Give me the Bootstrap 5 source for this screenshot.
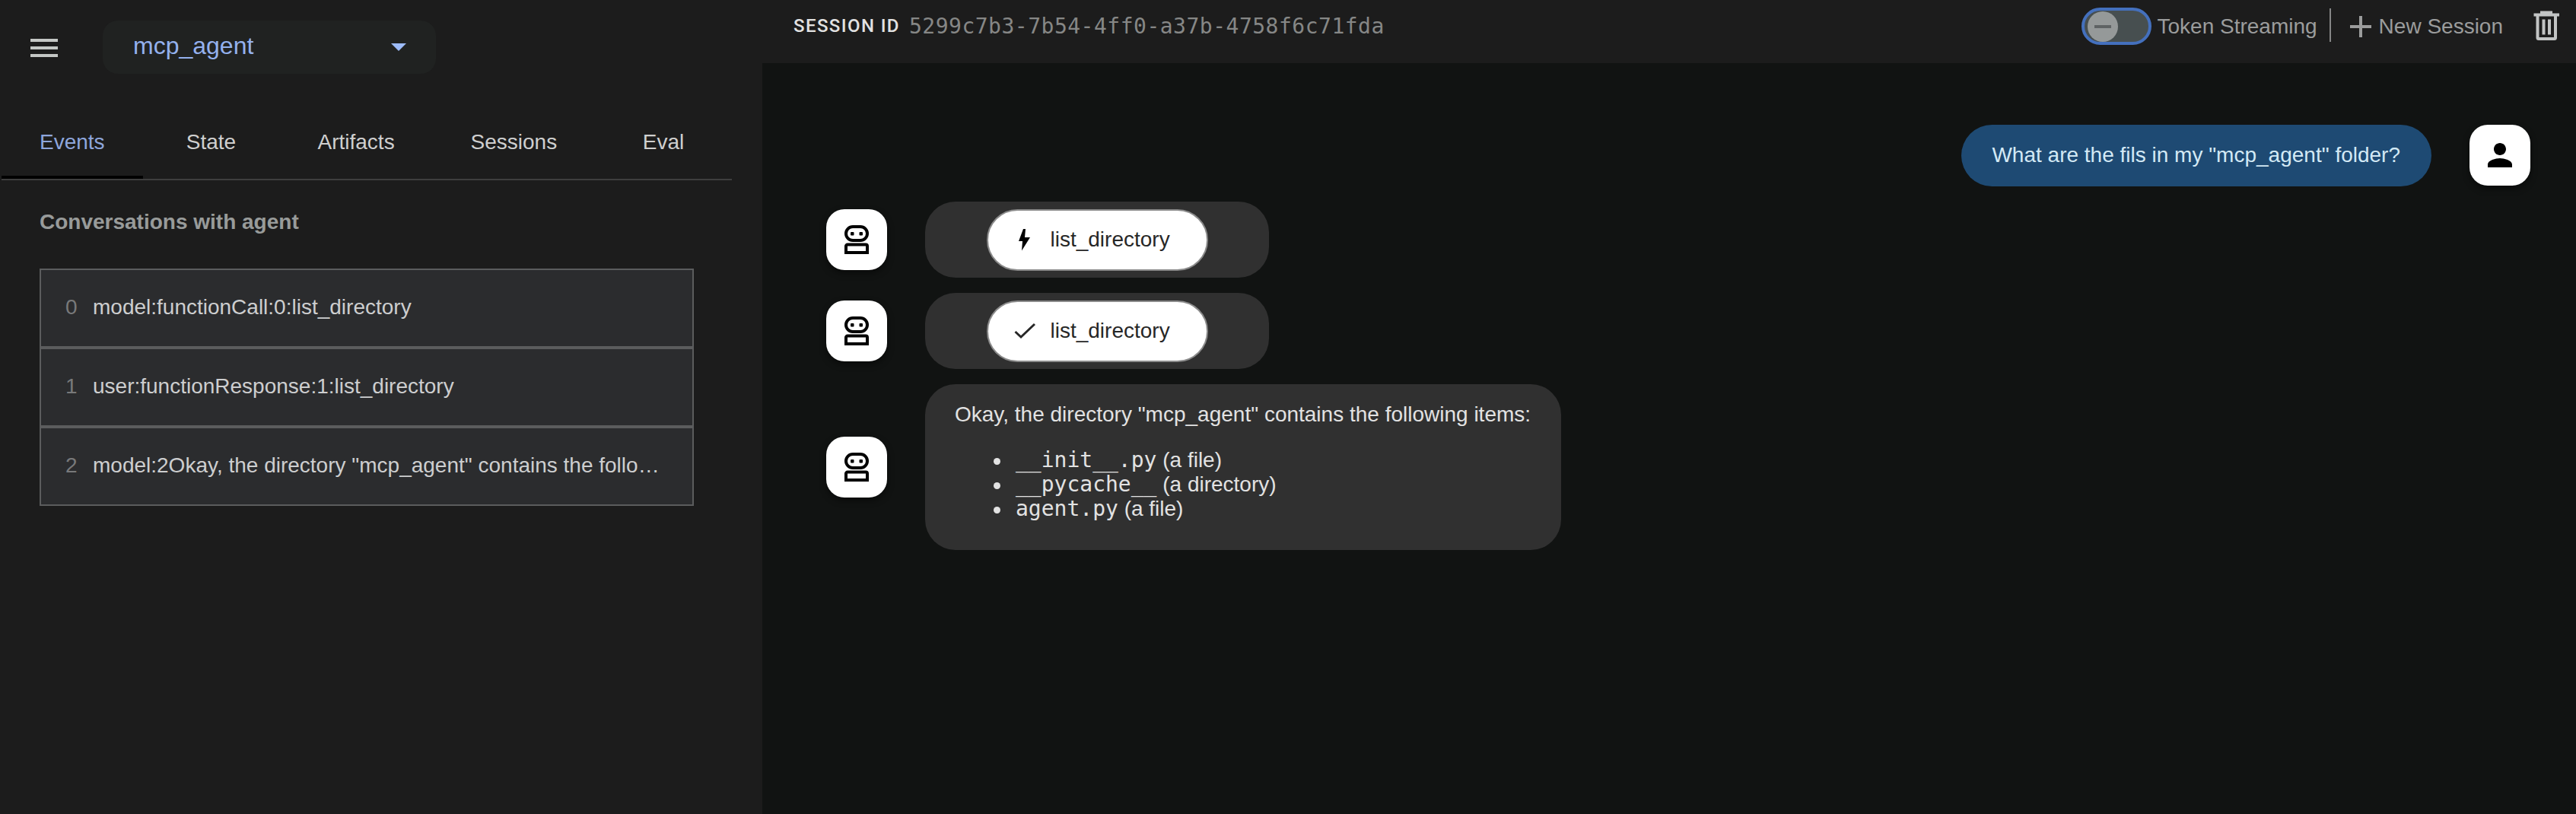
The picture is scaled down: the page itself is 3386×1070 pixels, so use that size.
<!DOCTYPE html>
<html lang="en" data-bs-theme="dark">
<head>
<meta charset="utf-8">
<title>Agent session</title>
<link rel="stylesheet" href="https://cdn.jsdelivr.net/npm/bootstrap@5.3.0/dist/css/bootstrap.min.css">
<style>
  body { font-family: "Liberation Sans", Arial, sans-serif; font-size: 28px; line-height: 32px; background: #111312; color: #e3e3e3; }
  svg { display: block; flex: none; }
  .side-panel { width: 1002px; background: #1c1c1c; }
  .side-top { height: 97px; padding: 27px 0 0 34px; }
  .menu-btn { margin-top: 12px; color: #c4c7c5; }
  .app-select { width: 438px; height: 70px; margin-left: 53px; padding: 0 39px 4px 40px; border-radius: 20px; background: #202221; color: #94b1ee; font-size: 32px; line-height: 66px; }
  .app-select svg { margin-top: 4px; }
  .tab-strip { width: 960px; margin: 42px 0 0 2px; height: 98px; border-bottom: 2px solid #3e3e3e; }
  .tab-strip .nav-link { min-width: 180px; height: 96px; padding: 32px 50px; color: #cfcfcf; border: 0; border-radius: 0; }
  .tab-strip .nav-link.active { background: none; color: #8ea6dc; border-bottom: 4px solid #000; }
  .side-title { margin: 39px 0 0 52px; font-size: 28px; line-height: 32px; font-weight: 700; color: #989b9a; }
  .event-list { width: 860px; margin: 45px 0 0 52px; --bs-list-group-border-radius: 0; }
  .event-list .list-group-item { height: 104px; padding: 33px 40px 0 32px; background: #2b2c2e; border: 2px solid #5b5c5d; color: #cdcecf; }
  .event-no { width: 36px; color: #78797a; flex: none; }
  .top-bar { height: 83px; padding: 0 22px 0 41px; background: #1c1c1c; color: #9b9c9c; }
  .session-label { font: 500 24px/32px Roboto, sans-serif; letter-spacing: 1.4px; color: #e2e2e2; margin-top: 18px; }
  .session-id { font: 28px/32px "DejaVu Sans Mono", monospace; letter-spacing: .5px; color: #868786; margin: 19px 0 0 12px; }
  .stream-switch { width: 92px; height: 49px; margin: 10px 7px 0 0; padding: 1px 4px; border: 4px solid #4470bd; border-radius: 25px; background: #474f50; }
  .stream-knob { width: 40px; height: 40px; border-radius: 50%; background: #959999; }
  .stream-knob i { width: 22px; height: 4px; background: #5f6364; }
  .bar-text { margin-top: 19px; }
  .bar-new { margin: 19px 2px 0 10px; }
  .bar-rule { width: 2px; height: 44px; margin: 11px 25px 0 16px; background: #858686; }
  .chat { padding: 81px 60px 0 84px; }
  .avatar-box { width: 80px; height: 80px; border-radius: 24px; background: #fff; color: #000; box-shadow: 0 4px 10px rgba(0,0,0,.45); flex: none; }
  .user-bubble { height: 81px; padding: 24px 41px 0 40px; border-radius: 41px; background: #1e4a73; color: #d3e9f5; margin-right: 50px; }
  .bot-bubble { border-radius: 40px; background: #303030; margin-left: 50px; }
  .call-bubble { width: 452px; height: 100px; }
  .call-chip { width: 291px; height: 81px; padding: 0 0 0 31px; border: 2px solid #8b8b8b; border-radius: 41px; background: #fff; color: #272727; line-height: 76px; --bs-btn-font-size: 28px; }
  .reply-bubble { width: 836px; height: 218px; padding: 24px 39px; color: #e2e2e2; }
  .reply-bubble ul { margin: 28px 0 0; padding-left: 51px; list-style: none; }
  .reply-bubble li { height: 32px; }
  .reply-bubble li::before { content: ""; display: inline-block; width: 9px; height: 9px; margin-right: 20px; border-radius: 50%; background: currentColor; vertical-align: 3px; }
  .reply-bubble code { font: 28px/32px "DejaVu Sans Mono", monospace; color: inherit; }
</style>
</head>
<body>
<svg class="d-none">
  <symbol id="robot" viewBox="0 0 32 38">
    <rect x="2" y="2" width="28" height="18" rx="9" fill="none" stroke="currentColor" stroke-width="4"/>
    <rect x="8" y="9" width="4.500" height="4.500" rx="1"/><rect x="19.500" y="9" width="4.500" height="4.500" rx="1"/>
    <path d="M2 36V27.500a2 2 0 0 1 2-2h24a2 2 0 0 1 2 2V36z" fill="none" stroke="currentColor" stroke-width="4"/>
  </symbol>
</svg>
<div class="d-flex vh-100 overflow-hidden">
  <aside class="side-panel flex-shrink-0">
    <div class="side-top d-flex align-items-start">
      <svg class="menu-btn" width="48" height="48" viewBox="0 0 24 24" fill="currentColor"><path d="M3 18h18v-2H3v2zm0-5h18v-2H3v2zm0-7v2h18V6H3z"/></svg>
      <div class="app-select d-flex justify-content-between align-items-center">
        <span>mcp_agent</span>
        <svg width="20" height="10" viewBox="0 0 20 10" fill="#9dbcfa"><path d="M0 0h20L10 10z"/></svg>
      </div>
    </div>
    <nav class="tab-strip nav flex-nowrap text-center">
      <a class="nav-link active">Events</a>
      <a class="nav-link">State</a>
      <a class="nav-link">Artifacts</a>
      <a class="nav-link">Sessions</a>
      <a class="nav-link">Eval</a>
    </nav>
    <h2 class="side-title">Conversations with agent</h2>
    <div class="event-list list-group">
      <div class="list-group-item d-flex"><span class="event-no">0</span><span class="text-truncate">model:functionCall:0:list_directory</span></div>
      <div class="list-group-item d-flex"><span class="event-no">1</span><span class="text-truncate">user:functionResponse:1:list_directory</span></div>
      <div class="list-group-item d-flex"><span class="event-no">2</span><span class="text-truncate">model:2Okay, the directory "mcp_agent" contains the follo…</span></div>
    </div>
  </aside>
  <main class="flex-grow-1">
    <header class="top-bar d-flex align-items-start">
      <div class="session-label">SESSION ID</div>
      <div class="session-id">5299c7b3-7b54-4ff0-a37b-4758f6c71fda</div>
      <div class="stream-switch ms-auto">
        <div class="stream-knob d-flex align-items-center justify-content-center"><i></i></div>
      </div>
      <span class="bar-text">Token Streaming</span>
      <span class="bar-rule"></span>
      <svg width="28" height="70" viewBox="0 0 28 70" fill="currentColor"><path d="M12 21h4v12h12v4H16v12h-4V37H0v-4h12z"/></svg>
      <span class="bar-new">New Session</span>
      <svg width="72" height="70" viewBox="0 0 72 70" fill="none" stroke="#c2c4c4" stroke-width="4"><path d="M38.500 19.500H72M47 16.500H63M43.500 20V49.500Q43.500 51 45 51H65.500Q67 51 67 49.500V20M51.500 25.500V45.500M59 25.500V45.500"/></svg>
    </header>
    <section class="chat">
      <div class="d-flex justify-content-end">
        <div class="user-bubble">What are the fils in my "mcp_agent" folder?</div>
        <div class="avatar-box d-flex align-items-center justify-content-center">
          <svg width="48" height="48" viewBox="0 0 24 24" fill="currentColor"><path d="M12 12c2.210 0 4-1.790 4-4s-1.790-4-4-4-4 1.790-4 4 1.790 4 4 4zm0 2c-2.670 0-8 1.340-8 4v2h16v-2c0-2.660-5.330-4-8-4z"/></svg>
        </div>
      </div>
      <div class="d-flex align-items-center mt-3 pt-1">
        <div class="avatar-box d-flex align-items-center justify-content-center"><svg width="32" height="38"><use href="#robot"/></svg></div>
        <div class="bot-bubble call-bubble d-flex align-items-center justify-content-center">
          <div class="call-chip btn d-flex align-items-center">
            <svg width="31" height="32" viewBox="0 0 31 32" fill="#000"><path d="M17.500 1.500 11.500 17.500H16.500L15.500 30 26.500 12.500H19.500L20.500 1.500z" transform="translate(-2.500 .5)"/></svg>
            <span class="ms-3 ps-1">list_directory</span>
          </div>
        </div>
      </div>
      <div class="d-flex align-items-center mt-3 pt-1">
        <div class="avatar-box d-flex align-items-center justify-content-center"><svg width="32" height="38"><use href="#robot"/></svg></div>
        <div class="bot-bubble call-bubble d-flex align-items-center justify-content-center">
          <div class="call-chip btn d-flex align-items-center">
            <svg width="31" height="32" viewBox="0 0 31 32" fill="none" stroke="#272727" stroke-width="3"><path d="M4.500 17 12 24 30 7"/></svg>
            <span class="ms-3 ps-1">list_directory</span>
          </div>
        </div>
      </div>
      <div class="d-flex align-items-center mt-3 pt-1">
        <div class="avatar-box d-flex align-items-center justify-content-center"><svg width="32" height="38"><use href="#robot"/></svg></div>
        <div class="bot-bubble reply-bubble">
          <p class="m-0">Okay, the directory "mcp_agent" contains the following items:</p>
          <ul>
            <li><code>__init__.py</code> (a file)</li>
            <li><code>__pycache__</code> (a directory)</li>
            <li><code>agent.py</code> (a file)</li>
          </ul>
        </div>
      </div>
    </section>
  </main>
</div>
<script src="https://cdn.jsdelivr.net/npm/bootstrap@5.3.0/dist/js/bootstrap.bundle.min.js"></script>
</body>
</html>
